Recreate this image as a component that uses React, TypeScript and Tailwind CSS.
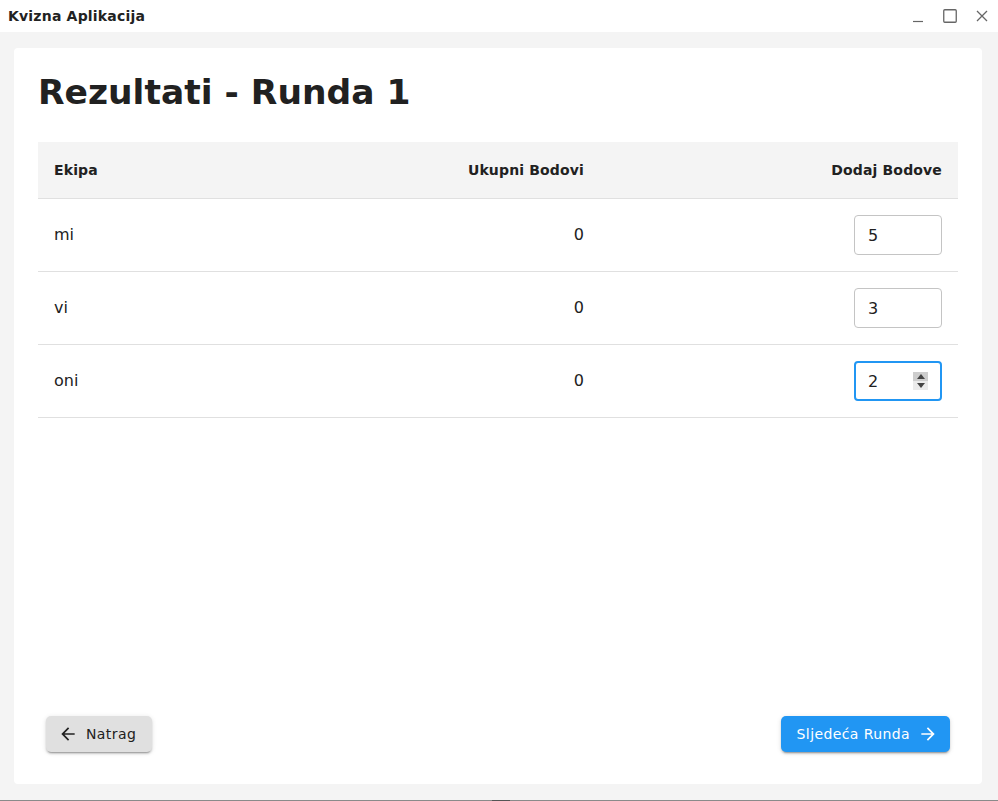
import React from "react";

const rows = [
  { name: "mi", total: 0, add: "5" },
  { name: "vi", total: 0, add: "3" },
  { name: "oni", total: 0, add: "2" },
];

function ArrowBack() {
  return (
    <svg width="20" height="20" viewBox="0 0 24 24" fill="currentColor">
      <path d="M20 11H7.83l5.59-5.59L12 4l-8 8 8 8 1.41-1.41L7.83 13H20v-2z" />
    </svg>
  );
}

function ArrowForward() {
  return (
    <svg width="20" height="20" viewBox="0 0 24 24" fill="currentColor">
      <path d="M12 4l-1.41 1.41L16.17 11H4v2h12.17l-5.58 5.59L12 20l8-8z" />
    </svg>
  );
}

export default function App() {
  return (
    <div
      className="w-[998px] h-[801px] flex flex-col bg-[#f4f4f4] text-[#212121] overflow-hidden"
      style={{ fontFamily: "'DejaVu Sans', sans-serif" }}
    >
      {/* Title bar */}
      <div className="h-[32px] bg-white flex items-center justify-between shrink-0">
        <div className="pl-[8px] text-[14px] font-bold tracking-[0.2px] text-[#222]">Kvizna Aplikacija</div>
        <div className="flex items-center h-full">
          <div className="w-[32px] h-full flex items-center justify-center">
            <svg width="12" height="12" viewBox="0 0 12 12" className="mt-[10px]">
              <line x1="1" y1="6.5" x2="11" y2="6.5" stroke="#666" strokeWidth="1.2" />
            </svg>
          </div>
          <div className="w-[32px] h-full flex items-center justify-center">
            <svg width="14" height="14" viewBox="0 0 14 14">
              <rect x="0.75" y="0.75" width="12.5" height="12.5" rx="1" fill="none" stroke="#666" strokeWidth="1.3" />
            </svg>
          </div>
          <div className="w-[32px] h-full flex items-center justify-center">
            <svg width="12" height="12" viewBox="0 0 12 12">
              <path d="M1 1L11 11M11 1L1 11" stroke="#666" strokeWidth="1.3" />
            </svg>
          </div>
        </div>
      </div>

      {/* Content */}
      <div className="flex-1 pl-[14px] pr-[16px] pt-[16px] pb-[16px] flex">
        <div className="flex-1 bg-white rounded-[4px] p-[24px] flex flex-col">
          <h1 className="text-[34.5px] font-bold leading-[40px] mb-[30px] text-[#212121]">
            Rezultati - Runda 1
          </h1>

          <div className="w-full">
            <div className="grid grid-cols-[262px_300px_1fr] h-[57px] bg-[#f4f4f4] border-b border-[#e0e0e0] items-center text-[14px] font-bold tracking-[0.15px]">
              <div className="px-[16px]">Ekipa</div>
              <div className="px-[16px] text-right">Ukupni Bodovi</div>
              <div className="px-[16px] text-right">Dodaj Bodove</div>
            </div>
            {rows.map((r, i) => (
              <div
                key={r.name}
                className="grid grid-cols-[262px_300px_1fr] h-[73px] border-b border-[#e0e0e0] items-center text-[16px]"
              >
                <div className="px-[16px]">{r.name}</div>
                <div className="px-[16px] text-right">{r.total}</div>
                <div className="px-[16px] flex justify-end">
                  <div className="relative w-[88px] h-[40px]">
                    <input
                      type="text"
                      readOnly
                      value={r.add}
                      className={
                        i === 2
                          ? "w-full h-full rounded-[4px] border-2 border-[#2196f3] pl-[12px] text-[16px] outline-none text-[#212121]"
                          : "w-full h-full rounded-[4px] border border-[#c4c4c4] pl-[13px] text-[16px] outline-none text-[#212121]"
                      }
                      style={{ fontFamily: "'DejaVu Sans', sans-serif" }}
                    />
                    {i === 2 && (
                      <div className="absolute left-[59px] top-[11px] w-[15px] h-[18px] flex flex-col">
                        <div className="h-[9px] bg-[#cdcdcd] flex items-center justify-center">
                          <svg width="8" height="5" viewBox="0 0 8 5">
                            <path d="M0 5L4 0L8 5Z" fill="#444" />
                          </svg>
                        </div>
                        <div className="h-[9px] bg-[#ebebeb] flex items-center justify-center">
                          <svg width="8" height="5" viewBox="0 0 8 5">
                            <path d="M0 0L4 5L8 0Z" fill="#444" />
                          </svg>
                        </div>
                      </div>
                    )}
                  </div>
                </div>
              </div>
            ))}
          </div>

          <div className="flex-1" />

          <div className="flex justify-between items-center px-[8px] pb-[8px]">
            <button className="h-[36px] flex items-center pl-[12px] pr-[16px] rounded-[5px] bg-[#e0e0e0] text-[#212121] text-[14px] tracking-[0.4px] shadow-[0_3px_1px_-2px_rgba(0,0,0,0.2),0_2px_2px_0_rgba(0,0,0,0.14),0_1px_5px_0_rgba(0,0,0,0.12)]">
              <span className="mr-[8px] flex"><ArrowBack /></span>
              Natrag
            </button>
            <button className="h-[36px] flex items-center pl-[16px] pr-[12px] rounded-[5px] bg-[#2196f3] text-white text-[14px] tracking-[0.4px] shadow-[0_3px_1px_-2px_rgba(0,0,0,0.2),0_2px_2px_0_rgba(0,0,0,0.14),0_1px_5px_0_rgba(0,0,0,0.12)]">
              Sljedeća Runda
              <span className="ml-[8px] flex"><ArrowForward /></span>
            </button>
          </div>
        </div>
      </div>

      {/* Bottom edge */}
      <div className="h-[1px] bg-[#8a8a8a] shrink-0 flex justify-center">
        <div className="w-[18px] h-[1px] bg-[#555] ml-[4px]" />
      </div>
    </div>
  );
}
